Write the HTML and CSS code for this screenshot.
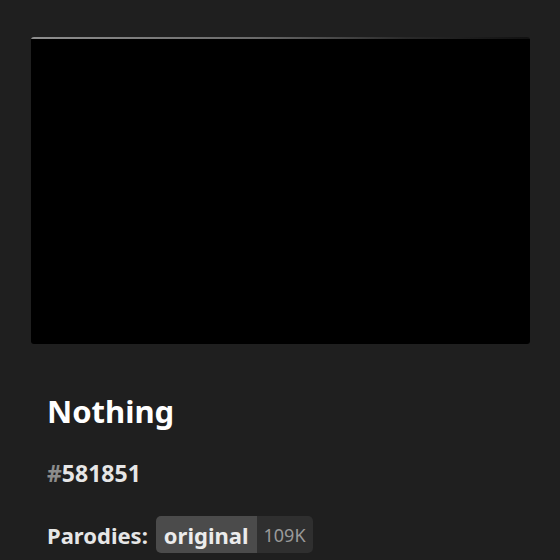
FILE: index.html
```html
<!DOCTYPE html>
<html lang="en">
<head>
    <meta charset="UTF-8">
    <meta name="viewport" content="width=device-width, initial-scale=1.0">
    <title>Nothing #581851</title>
    <link rel="stylesheet" href="styles.css">
</head>
<body>
    <div class="gallery">
        <div class="cover"></div>

        <div class="info">
            <h1 class="title">Nothing</h1>
            <h3 class="gallery-id"><span class="hash">#</span>581851</h3>

            <div class="tag-row">
                <span class="tag-label">Parodies:</span>
                <a class="tag" href="#">
                    <span class="tag-name">original</span>
                    <span class="tag-count">109K</span>
                </a>
            </div>
        </div>
    </div>
</body>
</html>
```

FILE: styles.css
```css
:root {
    --bg-color: #1f1f1f;
    --text-color: #ffffff;
    --muted: #8c8c8c;
    --tag-bg: #4b4b4b;
    --count-bg: #2f2f2f;
}

* {
    box-sizing: border-box;
    margin: 0;
    padding: 0;
}

body {
    font-family: 'Noto Sans', 'Open Sans', sans-serif;
    background-color: var(--bg-color);
    color: var(--text-color);
    min-height: 100vh;
    overflow: hidden;
}

.gallery {
    padding: 37px 30px 0 31px;
}

.cover {
    height: 307px;
    border-radius: 3px;
    background:
        linear-gradient(to right, #8f8f8f, #6a6a6a 45%, #2a2a2a 75%, #111 100%) top / 100% 2px no-repeat,
        #000;
}

.info {
    padding: 0 16px;
}

.title {
    margin-top: 47px;
    font-size: 31px;
    line-height: 40px;
    font-weight: 700;
}

.gallery-id {
    margin-top: 27px;
    font-size: 23px;
    line-height: 30px;
    font-weight: 700;
    color: #e6e6e6;
}

.hash {
    color: var(--muted);
}

.tag-row {
    margin-top: 28px;
    display: flex;
    align-items: center;
    gap: 8px;
}

.tag-label {
    font-size: 22px;
    font-weight: 700;
    color: #e6e6e6;
}

.tag {
    display: flex;
    height: 37px;
    border-radius: 5px;
    overflow: hidden;
    text-decoration: none;
}

.tag-name {
    display: flex;
    align-items: center;
    padding: 0 8px;
    background-color: var(--tag-bg);
    color: #ececec;
    font-size: 22px;
    font-weight: 700;
}

.tag-count {
    display: flex;
    align-items: center;
    padding: 0 7px;
    background-color: var(--count-bg);
    color: #9a9a9a;
    font-size: 18px;
}
```
